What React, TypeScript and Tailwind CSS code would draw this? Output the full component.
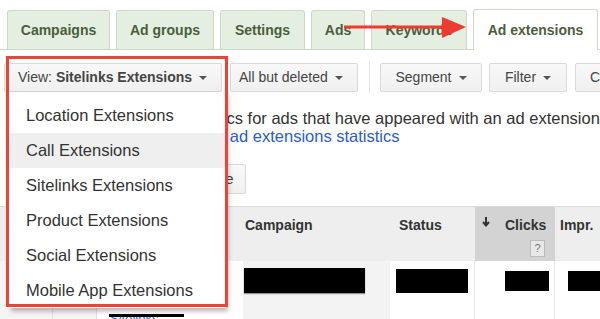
import React from "react";

const tabs = [
  { label: "Campaigns", w: "w-[103px]" },
  { label: "Ad groups", w: "w-[98px]" },
  { label: "Settings", w: "w-[85px]" },
  { label: "Ads", w: "w-[54px]" },
  { label: "Keywords", w: "w-[96px]" },
];

const menuItems = [
  "Location Extensions",
  "Call Extensions",
  "Sitelinks Extensions",
  "Product Extensions",
  "Social Extensions",
  "Mobile App Extensions",
];

function Caret() {
  return <span className="ml-[7px] inline-block h-0 w-0 border-x-[4px] border-t-[4px] border-x-transparent border-t-[#555]" />;
}

function ToolButton({ children, className }: { children: React.ReactNode; className?: string }) {
  return (
    <div
      className={`flex h-[29px] shrink-0 items-center whitespace-nowrap rounded-[2px] border border-[#d9d9d9] bg-gradient-to-b from-[#f8f8f8] to-[#f0f0f0] px-[14px] text-[14px] text-[#444] ${className ?? ""}`}
    >
      {children}
    </div>
  );
}

export default function App() {
  return (
    <div className="relative h-[319px] w-[600px] overflow-hidden bg-white font-['Liberation_Sans',Arial,sans-serif]">
      {/* tabs */}
      <div className="flex items-end gap-[6px] border-b border-[#c9dcc3] pl-[7px] pt-[9px]">
        {tabs.map((t) => (
          <div
            key={t.label}
            className={`${t.w} flex h-[39px] items-center justify-center rounded-t-[3px] border border-b-0 border-[#c9dcc3] bg-[#e5efe1] text-[14px] font-bold text-[#4a5e3c]`}
          >
            {t.label}
          </div>
        ))}
        <div className="-mb-px flex h-[41px] w-[125px] items-center justify-center rounded-t-[3px] border border-b-0 border-[#c9dcc3] bg-white text-[14px] font-bold text-[#4a5e3c]">
          Ad extensions
        </div>
      </div>

      {/* toolbar */}
      <div className="mt-[12px] flex items-center pl-[4px]">
        <ToolButton className="w-[218px] border-[#4d90fe] pl-[13px]">
          <span>View:&nbsp;</span>
          <span className="font-bold">Sitelinks Extensions</span>
          <Caret />
        </ToolButton>
        <ToolButton className="ml-[8px] w-[128px] pl-[8px]">
          All but deleted
          <Caret />
        </ToolButton>
        <div className="ml-[11px] h-[31px] w-px shrink-0 bg-[#e3e3e3]" />
        <ToolButton className="ml-[10px] w-[102px] justify-center">
          Segment
          <Caret />
        </ToolButton>
        <ToolButton className="ml-[7px] w-[78px] justify-center">
          Filter
          <Caret />
        </ToolButton>
        <ToolButton className="ml-[8px] w-[40px]">C</ToolButton>
      </div>

      {/* description */}
      <div className="mt-[16px] whitespace-nowrap pl-[177px] text-[16.5px] leading-[18px] text-[#333]">
        <div>Statistics for ads that have appeared with an ad extension.</div>
        <div className="pl-[7px] text-[#2a5bd7]">Show ad extensions statistics</div>
      </div>

      <div className="mt-[19px] flex pl-[170px]">
        <ToolButton className="h-[30px] w-[76px] pl-[10px] text-[15px]">Change</ToolButton>
      </div>

      {/* table */}
      <div className="mt-[12px] grid grid-cols-[53px_44px_140px_153px_85px_80px_45px] border-t border-[#dcdcdc] text-[14px] font-bold text-[#333]">
        <div className="h-[54px] bg-[#eeeeee]" />
        <div className="h-[54px] bg-[#eeeeee]" />
        <div className="h-[54px] bg-[#eeeeee]" />
        <div className="h-[54px] bg-[#eeeeee] pl-[8px] pt-[8px]">Campaign</div>
        <div className="h-[54px] bg-[#eeeeee] pl-[9px] pt-[8px]">Status</div>
        <div className="relative h-[54px] bg-[#d3d3d3] pt-[8px]">
          <svg className="absolute left-[7px] top-[10px]" width="8" height="10" viewBox="0 0 8 10">
            <path d="M4 0v7M1 5l3 3.5L7 5" stroke="#333" strokeWidth="2" fill="none" />
          </svg>
          <div className="pl-[30px]">Clicks</div>
          <div className="ml-[55px] mt-[4px] flex h-[17px] w-[15px] items-center justify-center border border-[#bbb] bg-[#e8e8e8] text-[11px] font-normal text-[#777]">
            ?
          </div>
        </div>
        <div className="h-[54px] bg-[#eeeeee] pl-[5px] pt-[8px]">Impr.</div>

        <div className="h-[60px] border-r border-[#e2e2e2] bg-[#f5f5f5]" />
        <div className="h-[60px] border-r border-[#e2e2e2] bg-[#f5f5f5]" />
        <div className="relative h-[60px] bg-white">
          <div className="absolute left-[13px] top-[48px] text-[13px] font-normal text-[#2a5bd7]">Sitelinks</div>
          <div className="absolute left-[12px] top-[53px] h-[3px] w-[75px] bg-black" />
        </div>
        <div className="h-[60px] border-l-[6px] border-white bg-[#f3f3f3] pl-[1px] pt-[7px]">
          <div className="h-[25px] w-[121px] bg-black shadow-[0_1px_1px_rgba(0,0,0,0.4)]" />
        </div>
        <div className="h-[60px] border-r border-[#e6e6e6] pl-[6px] pt-[8px]">
          <div className="h-[24px] w-[72px] bg-black" />
        </div>
        <div className="h-[60px] border-r border-[#e6e6e6] pl-[30px] pt-[10px]">
          <div className="h-[20px] w-[44px] bg-black" />
        </div>
        <div className="h-[60px] pl-[13px] pt-[10px]">
          <div className="h-[20px] w-[40px] bg-black" />
        </div>
      </div>

      {/* dropdown menu */}
      <div className="absolute left-[9px] top-[92px] w-[217px] bg-white pt-[6px] shadow-[2px_3px_5px_rgba(0,0,0,0.3)]">
        {menuItems.map((item) => (
          <div
            key={item}
            className={`flex h-[35px] items-center whitespace-nowrap pl-[17px] text-[16.5px] text-[#333] ${item === "Call Extensions" ? "bg-[#efefef]" : ""}`}
          >
            {item}
          </div>
        ))}
      </div>

      {/* annotation: red box */}
      <div className="pointer-events-none absolute left-[6px] top-[56px] h-[251px] w-[222px] border-[3px] border-[#ef4136]" />

      {/* annotation: arrow */}
      <svg className="pointer-events-none absolute left-[340px] top-[15px]" width="130" height="26" viewBox="0 0 130 26">
        <line x1="4" y1="12" x2="108" y2="12" stroke="#ee3b2f" strokeWidth="3" />
        <polygon points="102,2 126,12 102,23" fill="#ee3b2f" />
      </svg>
    </div>
  );
}
